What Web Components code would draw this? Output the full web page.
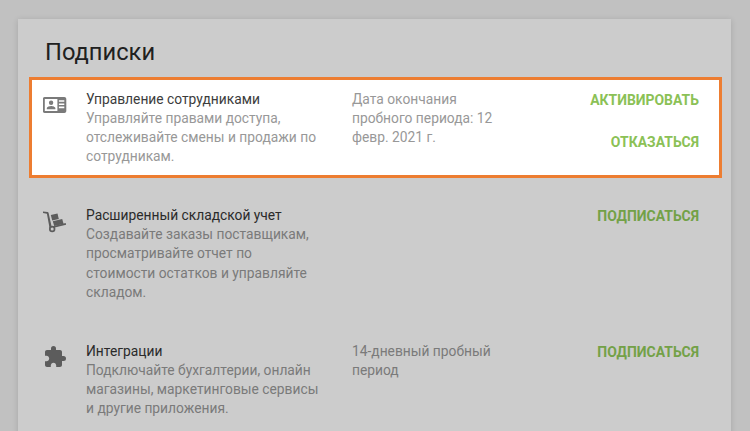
<!DOCTYPE html>
<html lang="ru">
<head>
<meta charset="utf-8">
<title>Подписки</title>
<style>
  html, body { margin: 0; height: 100%; overflow: hidden; background: #c1c1c1; }
  body { font-family: Roboto, "Noto Sans", sans-serif; }
</style>
</head>
<body>
<subs-page>
  <subs-card heading="Подписки">
    <sub-row highlight>
      <svg slot="icon" viewBox="0 0 24 24" width="24" height="24"><path fill="#7a7a7a" fill-rule="evenodd" d="M1.700 4h19.600c1.100 0 2 .9 2 2v12c0 1.100-.9 2-2 2H1.700c-1.100 0-2-.9-2-2V6c0-1.100.9-2 2-2zM1.800 6v12h12.600V6zM15.900 7.200v1.600h5.400V7.200zm0 3.200V12h5.400v-1.600zm0 3.200v1.600h5.400v-1.600zM8.100 7.600a2.200 2.200 0 1 1 0 4.400 2.200 2.200 0 0 1 0-4.400zM3.800 16.200v-1.100c0-1.400 2.900-2.200 4.300-2.200s4.300.8 4.300 2.200v1.100z"/></svg>
      <span slot="title">Управление сотрудниками</span>
      Управляйте правами доступа, отслеживайте смены и продажи по сотрудникам.
      <span slot="info">Дата окончания пробного периода: 12 февр. 2021 г.</span>
      <sub-action slot="actions">Активировать</sub-action>
      <sub-action slot="actions">Отказаться</sub-action>
    </sub-row>
    <sub-row>
      <svg slot="icon" viewBox="0 0 24 24" width="24" height="24"><g fill="#5c5c5c"><path d="M0 2.400 4.600 3.100c.5.100.8.400 1 .9l3 13.400 14.100-3.300.4 1.700-15.400 3.600a1 1 0 0 1-1.200-.7L3.900 4.700 0 4.100z"/><path d="M7.800 6 14.500 4.400 15.800 10 9.200 11.600z"/><path d="M9.800 12.200 19.200 10l1.400 5-9.400 2z"/><circle cx="9.200" cy="20" r="3.200"/></g><circle cx="9.200" cy="20" r="1.500" fill="#cccccc"/></svg>
      <span slot="title">Расширенный складской учет</span>
      Создавайте заказы поставщикам, просматривайте отчет по стоимости остатков и управляйте складом.
      <sub-action slot="actions">Подписаться</sub-action>
    </sub-row>
    <sub-row>
      <svg slot="icon" viewBox="0 0 24 24" width="24" height="24"><path fill="#5c5c5c" d="M20.500 11H19V7c0-1.100-.9-2-2-2h-4V3.500a2.500 2.500 0 0 0-5 0V5H4c-1.100 0-2 .9-2 2v3.800h1.500c1.500 0 2.700 1.200 2.700 2.700S5 16.200 3.500 16.200H2V20c0 1.100.9 2 2 2h3.800v-1.500c0-1.500 1.200-2.700 2.700-2.700s2.700 1.200 2.700 2.700V22H17c1.100 0 2-.9 2-2v-4h1.500a2.500 2.500 0 0 0 0-5z"/></svg>
      <span slot="title">Интеграции</span>
      Подключайте бухгалтерии, онлайн магазины, маркетинговые сервисы и другие приложения.
      <span slot="info">14-дневный пробный период</span>
      <sub-action slot="actions">Подписаться</sub-action>
    </sub-row>
  </subs-card>
</subs-page>

<script>
class SubsPage extends HTMLElement {
  constructor() {
    super();
    this.attachShadow({ mode: "open" });
    this.shadowRoot.innerHTML = `
      <style>
        :host { display: block; padding: 19px 19px 0 18px; }
      </style>
      <slot></slot>
    `;
  }
}

class SubsCard extends HTMLElement {
  constructor() {
    super();
    this.attachShadow({ mode: "open" });
    this.shadowRoot.innerHTML = `
      <style>
        :host {
          display: block;
          background: #cccccc;
          box-shadow: 0 1px 6px rgba(0, 0, 0, 0.14);
          padding: 16px 9px 0 11px;
          height: 412px;
          overflow: hidden;
          color: #202020;
        }
        h1 {
          margin: 0 0 8px 16px;
          font-size: 23.7px;
          line-height: 34px;
          font-weight: 400;
        }
        .rows { display: flex; flex-direction: column; }
      </style>
      <h1></h1>
      <div class="rows"><slot></slot></div>
    `;
    this.shadowRoot.querySelector("h1").textContent = this.getAttribute("heading");
  }
}

class SubRow extends HTMLElement {
  constructor() {
    super();
    this.attachShadow({ mode: "open" });
    this.shadowRoot.innerHTML = `
      <style>
        :host {
          display: grid;
          grid-template-columns: 43px 266px 1fr auto;
          margin-bottom: 15.500px;
          padding: 9.500px 20px 8.700px 11px;
          border: 3px solid transparent;
          font-size: 13.800px;
          line-height: 19.200px;
          color: #7a7a7a;
        }
        :host([highlight]) {
          background: #fff;
          border-color: #ed7d31;
          color: #989898;
        }
        .icon { padding-top: 3px; }
        ::slotted(svg) { display: block; }
        .title { color: #2a2a2a; }
        :host([highlight]) .title { color: #3c3c3c; }
        .info { width: 150px; }
        .desc { width: 235px; }
        .actions {
          display: flex;
          flex-direction: column;
          align-items: flex-end;
          gap: 22px;
        }
      </style>
      <div class="icon"><slot name="icon"></slot></div>
      <div class="desc">
        <div class="title"><slot name="title"></slot></div>
        <slot></slot>
      </div>
      <div class="info"><slot name="info"></slot></div>
      <div class="actions"><slot name="actions"></slot></div>
    `;
  }
}

class SubAction extends HTMLElement {
  constructor() {
    super();
    this.attachShadow({ mode: "open" });
    this.shadowRoot.innerHTML = `
      <style>
        :host {
          display: block;
          font-size: 13.950px;
          line-height: 20px;
          font-weight: 700;
          text-transform: uppercase;
          color: var(--action-color, #73a147);
        }
      </style>
      <slot></slot>
    `;
  }
  connectedCallback() {
    if (this.closest("sub-row")?.hasAttribute("highlight")) {
      this.style.setProperty("--action-color", "#8bc156");
    }
  }
}

customElements.define("subs-page", SubsPage);
customElements.define("subs-card", SubsCard);
customElements.define("sub-row", SubRow);
customElements.define("sub-action", SubAction);
</script>
</body>
</html>
